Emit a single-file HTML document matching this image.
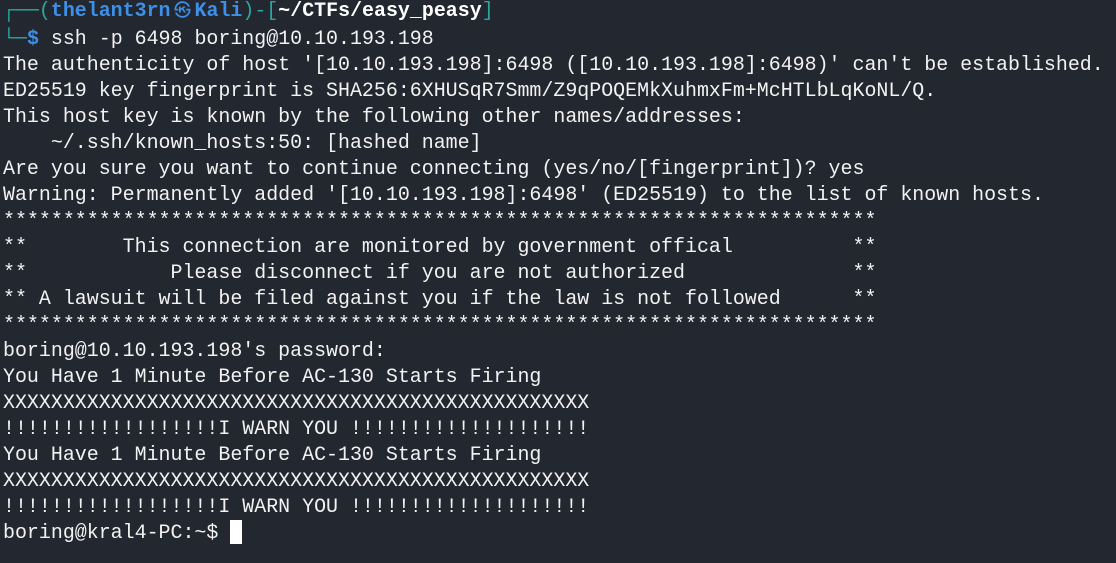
<!DOCTYPE html>
<html><head><meta charset="utf-8"><style>
html,body{margin:0;padding:0;background:#23272f;width:1116px;height:563px;overflow:hidden}
pre{margin:0;position:absolute;left:3px;top:-2px;font-family:"Liberation Mono","DejaVu Sans Mono",monospace;font-size:19.95px;line-height:26px;color:#f2f2f2;white-space:pre}
.t{color:#2aa7a0}.b{color:#3d8fe8;font-weight:bold}.w{color:#fff;font-weight:bold}
.sy{display:inline-block;width:24px;text-align:center;font-weight:normal;font-size:17px}
.cur{display:inline-block;width:12px;height:24px;background:#fff;vertical-align:-6px}
</style></head><body><pre><span class="t">┌──(</span><span class="b">thelant3rn<span class="sy">㉿</span>Kali</span><span class="t">)-[</span><span class="w">~/CTFs/easy_peasy</span><span class="t">]</span>
<span class="t">└─</span><span class="b">$</span> ssh -p 6498 boring@10.10.193.198
The authenticity of host '[10.10.193.198]:6498 ([10.10.193.198]:6498)' can't be established.
ED25519 key fingerprint is SHA256:6XHUSqR7Smm/Z9qPOQEMkXuhmxFm+McHTLbLqKoNL/Q.
This host key is known by the following other names/addresses:
    ~/.ssh/known_hosts:50: [hashed name]
Are you sure you want to continue connecting (yes/no/[fingerprint])? yes
Warning: Permanently added '[10.10.193.198]:6498' (ED25519) to the list of known hosts.
*************************************************************************
**        This connection are monitored by government offical          **
**            Please disconnect if you are not authorized              **
** A lawsuit will be filed against you if the law is not followed      **
*************************************************************************
boring@10.10.193.198's password: 
You Have 1 Minute Before AC-130 Starts Firing
XXXXXXXXXXXXXXXXXXXXXXXXXXXXXXXXXXXXXXXXXXXXXXXXX
!!!!!!!!!!!!!!!!!!I WARN YOU !!!!!!!!!!!!!!!!!!!!
You Have 1 Minute Before AC-130 Starts Firing
XXXXXXXXXXXXXXXXXXXXXXXXXXXXXXXXXXXXXXXXXXXXXXXXX
!!!!!!!!!!!!!!!!!!I WARN YOU !!!!!!!!!!!!!!!!!!!!
boring@kral4-PC:~$ <span class="cur"></span></pre></body></html>
